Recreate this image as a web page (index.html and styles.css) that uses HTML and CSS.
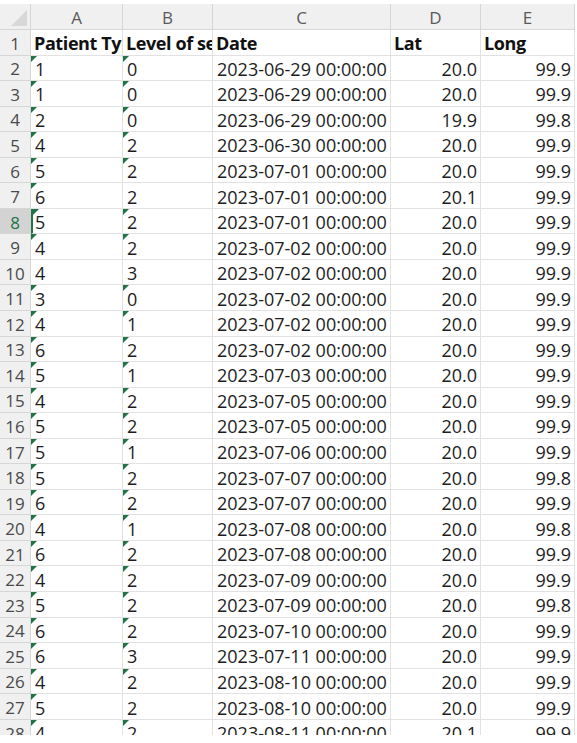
FILE: index.html
```html
<!DOCTYPE html>
<html lang="en">
<head>
    <meta charset="UTF-8">
    <meta name="viewport" content="width=device-width, initial-scale=1.0">
    <title>Patients sheet</title>
    <link rel="stylesheet" href="styles.css">
</head>
<body>
    <div class="sheet-frame">
        <div class="sheet" id="sheet">
            <div class="corner"><span class="corner-mark"></span></div>
            <div class="col-head">A</div>
            <div class="col-head">B</div>
            <div class="col-head">C</div>
            <div class="col-head">D</div>
            <div class="col-head">E</div>

            <div class="row-head">1</div>
            <div class="cell bold">Patient Type</div>
            <div class="cell bold">Level of service</div>
            <div class="cell bold">Date</div>
            <div class="cell bold">Lat</div>
            <div class="cell bold">Long</div>
        </div>
    </div>

    <script>
        // [type, level, date, lat, long, type stored as text, level stored as text]
        const rows = [
            ['1', '0', '2023-06-29', '20.0', '99.9', 1, 1],
            ['1', '0', '2023-06-29', '20.0', '99.9', 1, 1],
            ['2', '0', '2023-06-29', '19.9', '99.8', 1, 1],
            ['4', '2', '2023-06-30', '20.0', '99.9', 1, 1],
            ['5', '2', '2023-07-01', '20.0', '99.9', 1, 1],
            ['6', '2', '2023-07-01', '20.1', '99.9', 1, 0],
            ['5', '2', '2023-07-01', '20.0', '99.9', 1, 1],
            ['4', '2', '2023-07-02', '20.0', '99.9', 1, 1],
            ['4', '3', '2023-07-02', '20.0', '99.9', 0, 0],
            ['3', '0', '2023-07-02', '20.0', '99.9', 1, 1],
            ['4', '1', '2023-07-02', '20.0', '99.9', 1, 1],
            ['6', '2', '2023-07-02', '20.0', '99.9', 1, 1],
            ['5', '1', '2023-07-03', '20.0', '99.9', 1, 1],
            ['4', '2', '2023-07-05', '20.0', '99.9', 1, 1],
            ['5', '2', '2023-07-05', '20.0', '99.9', 1, 1],
            ['5', '1', '2023-07-06', '20.0', '99.9', 1, 1],
            ['5', '2', '2023-07-07', '20.0', '99.8', 1, 1],
            ['6', '2', '2023-07-07', '20.0', '99.9', 1, 1],
            ['4', '1', '2023-07-08', '20.0', '99.8', 1, 1],
            ['6', '2', '2023-07-08', '20.0', '99.9', 1, 1],
            ['4', '2', '2023-07-09', '20.0', '99.9', 1, 1],
            ['5', '2', '2023-07-09', '20.0', '99.8', 1, 1],
            ['6', '2', '2023-07-10', '20.0', '99.9', 1, 1],
            ['6', '3', '2023-07-11', '20.0', '99.9', 1, 1],
            ['4', '2', '2023-08-10', '20.0', '99.9', 1, 1],
            ['5', '2', '2023-08-10', '20.0', '99.9', 1, 0],
            ['4', '2', '2023-08-11', '20.1', '99.9', 1, 1]
        ];

        const sheet = document.getElementById('sheet');

        function addCell(text, className) {
            const div = document.createElement('div');
            div.className = className;
            div.textContent = text;
            sheet.appendChild(div);
            return div;
        }

        rows.forEach((row, i) => {
            const n = i + 2;
            const active = n === 8;
            addCell(n, active ? 'row-head active' : 'row-head');
            addCell(row[0], 'cell' + (row[5] ? ' as-text' : '') + (active ? ' active-cell' : ''));
            addCell(row[1], 'cell' + (row[6] ? ' as-text' : ''));
            addCell(row[2] + ' 00:00:00', 'cell');
            addCell(row[3], 'cell num');
            addCell(row[4], 'cell num');
        });
    </script>
</body>
</html>
```

FILE: styles.css
```css
body {
    margin: 0;
    padding: 0;
    background: white;
    font-family: 'Open Sans', 'Liberation Sans', sans-serif;
}
.sheet-frame {
    margin-top: 4px;
    height: 731px;
    overflow: hidden;
}
.sheet {
    display: grid;
    grid-template-columns: 31px 92px 90px 178px 90px 94px;
    grid-template-rows: 26px;
    grid-auto-rows: 25.55px;
}
.corner,
.col-head,
.row-head {
    box-sizing: border-box;
    background: #f0f0f0;
    border-right: 1px solid #d6d6d6;
    border-bottom: 1px solid #d6d6d6;
    color: #555;
}
.corner {
    position: relative;
}
.corner-mark {
    position: absolute;
    right: 3px;
    bottom: 3px;
    width: 0;
    height: 0;
    border-left: 16px solid transparent;
    border-bottom: 16px solid #d8d8d8;
}
.col-head {
    display: flex;
    align-items: center;
    justify-content: center;
    font-size: 17px;
    color: #5a5a5a;
    padding-top: 1px;
}
.row-head {
    display: flex;
    align-items: center;
    justify-content: center;
    font-size: 17px;
    color: #4a4a4a;
    padding-top: 2px;
}
.row-head.active {
    background: #d3d3d3;
    color: #217346;
}
.cell {
    position: relative;
    box-sizing: border-box;
    border-right: 1px solid #e2e2e2;
    border-bottom: 1px solid #e2e2e2;
    padding: 2px 3px 0 4px;
    font-size: 18px;
    color: #1d1d1d;
    white-space: nowrap;
    overflow: hidden;
    display: flex;
    align-items: center;
}
.cell.active-cell {
    border-left: 2px solid #217346;
    padding-left: 2px;
}
.cell.bold {
    font-weight: 700;
    color: #111;
    letter-spacing: -0.4px;
    padding-left: 3px;
}
.cell.num {
    justify-content: flex-end;
}
.cell.as-text::before {
    content: '';
    position: absolute;
    top: 0;
    left: 0;
    width: 0;
    height: 0;
    border-top: 6px solid #217346;
    border-right: 6px solid transparent;
}
```
